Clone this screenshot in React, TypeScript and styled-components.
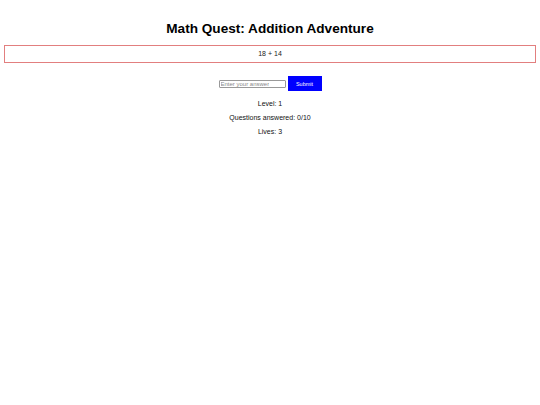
import React, { useState, FormEvent } from 'react';
import styled, { createGlobalStyle } from 'styled-components';

const GlobalStyle = createGlobalStyle`
  body {
    margin: 4px;
    background: #fff;
    font-family: "Liberation Sans", Arial, sans-serif;
    color: #000;
  }
`;

const Game = styled.div`
  text-align: center;
`;

const Title = styled.h1`
  font-size: 13.6px;
  line-height: 16px;
  font-weight: bold;
  margin: 17px 0 8px;
`;

const QuestionBox = styled.div`
  border: 1.5px solid #e27f7f;
  padding: 4px;
  font-size: 7px;
  line-height: 8px;
  color: #222;
`;

const AnswerForm = styled.form`
  display: flex;
  justify-content: center;
  align-items: center;
  margin-top: 13px;
`;

const AnswerInput = styled.input`
  box-sizing: border-box;
  width: 67px;
  height: 8px;
  padding: 0 1px;
  border: 1px solid #999;
  border-radius: 1px;
  font-family: "Liberation Sans", Arial, sans-serif;
  font-size: 6px;
  outline: none;

  &::placeholder {
    color: #888;
  }
`;

const SubmitButton = styled.button`
  width: 34px;
  height: 15px;
  margin-left: 2px;
  padding: 0;
  background-color: #0000ff;
  color: #fff;
  border: none;
  font-family: "Liberation Sans", Arial, sans-serif;
  font-size: 5.5px;
  cursor: pointer;
`;

const Stat = styled.p`
  font-size: 7px;
  line-height: 8px;
  margin: 9px 0 0;
  color: #111;

  & + & {
    margin-top: 6px;
  }
`;

const App: React.FC = () => {
  const [answer, setAnswer] = useState('');
  const [level] = useState(1);
  const [answered] = useState(0);
  const [lives] = useState(3);

  const handleSubmit = (e: FormEvent) => {
    e.preventDefault();
    setAnswer('');
  };

  return (
    <>
      <GlobalStyle />
      <Game>
        <Title>Math Quest: Addition Adventure</Title>
        <QuestionBox>18 + 14</QuestionBox>
        <AnswerForm onSubmit={handleSubmit}>
          <AnswerInput
            type="number"
            placeholder="Enter your answer"
            value={answer}
            onChange={(e) => setAnswer(e.target.value)}
          />
          <SubmitButton type="submit">Submit</SubmitButton>
        </AnswerForm>
        <Stat>Level: {level}</Stat>
        <Stat>Questions answered: {answered}/10</Stat>
        <Stat>Lives: {lives}</Stat>
      </Game>
    </>
  );
};

export default App;
